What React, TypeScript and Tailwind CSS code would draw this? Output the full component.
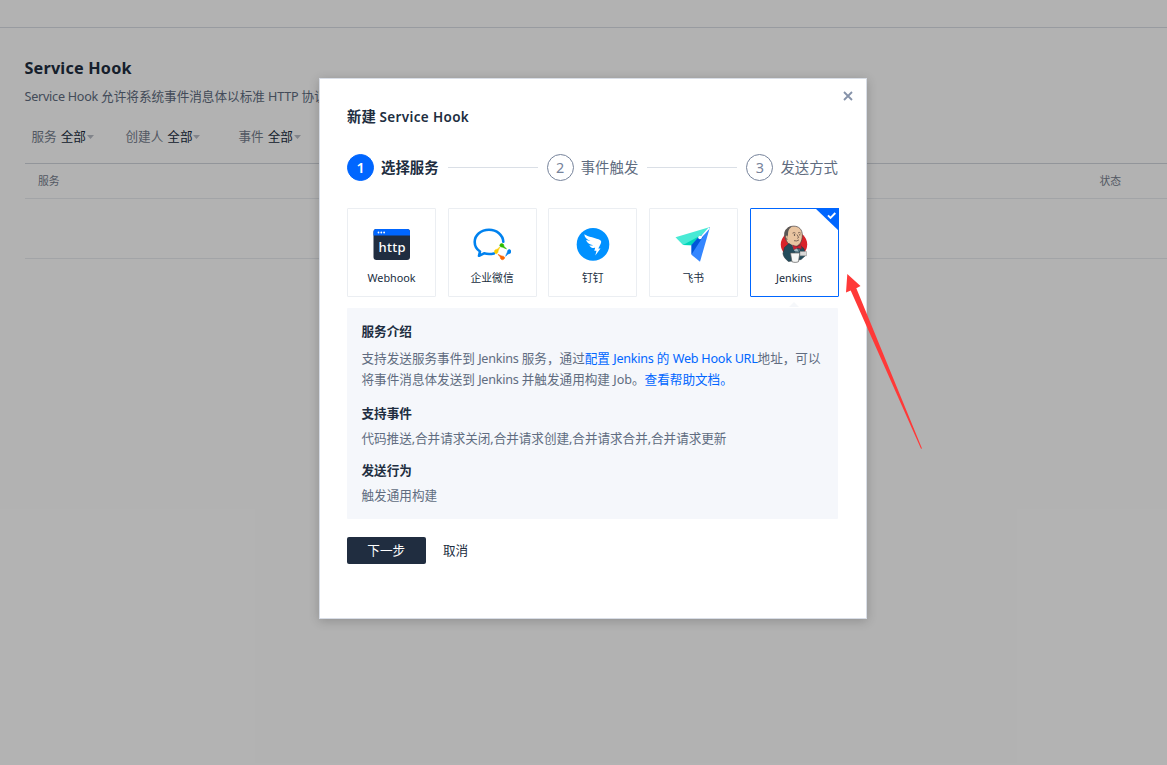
import type { ReactNode } from "react";

function Latin({ children }: { children: ReactNode }) {
  return <span className="tracking-[-0.25px]">{children}</span>;
}

function Caret() {
  return (
    <svg className="ml-px h-[4px] w-[7px]" viewBox="0 0 7 4">
      <path d="M0 0h7L3.5 4z" fill="#b9bdc6" />
    </svg>
  );
}

function Filter({ label, className }: { label: string; className: string }) {
  return (
    <div className={`flex items-center whitespace-nowrap ${className}`}>
      <span className="pt-px text-[#76808e]">{label}</span>
      <span className="ml-[4px] text-[#202d40]">全部</span>
      <Caret />
    </div>
  );
}

function WebhookIcon() {
  return (
    <svg className="h-[36px] w-[38px]" viewBox="0 0 38 36">
      <rect x=".5" y="3" width="36.500" height="31" rx="3" fill="#202d40" />
      <path d="M.5 9.500V6a3 3 0 0 1 3-3H34a3 3 0 0 1 3 3v3.500z" fill="#0066ff" />
      <g fill="#fff">
        <circle cx="5.500" cy="6.500" r=".9" />
        <circle cx="8.300" cy="6.500" r=".9" />
        <circle cx="11.100" cy="6.500" r=".9" />
      </g>
      <text x="19" y="26" fill="#fff" fontSize="13" fontWeight="500" textAnchor="middle" textLength="27" fontFamily="Noto Sans, sans-serif">http</text>
    </svg>
  );
}

function WecomIcon() {
  return (
    <svg className="h-[36px] w-[38px]" viewBox="0 0 38 36">
      <path d="M30.300 15.800C30 8.800 23.700 3.800 16 3.800 8 3.800 1.700 9 1.700 16c0 4 2 7.300 5.300 9.500L6 29.800l5-2.500c3.200.9 6.700.9 10 .1" fill="none" stroke="#0082ef" strokeWidth="2.600" strokeLinejoin="round" strokeLinecap="round" />
      <path d="M27 18.500c1-1.600 3.800-1 3.800 1 0 1.500 1.700 2.400 2.700 3.300-2.300-.5-3.300-1.700-5-1.800-1.300-.1-2.200-1.300-1.500-2.500z" fill="#2dbc00" stroke="#2dbc00" strokeWidth=".6" />
      <path d="M37.200 23.800c1.600 1.100 1 3.900-1.200 3.900-1.300 0-2.300 1.700-3.300 2.600.5-2.200 1.600-3.300 1.800-4.900.1-1.400 1.500-2.300 2.700-1.600z" fill="#0082ef" stroke="#0082ef" strokeWidth=".6" />
      <path d="M31.400 32.600c-1.200 1.900-3.900 1.200-4-.9 0-1.400-1.600-2.300-2.500-3.300 2.200.6 3.200 1.600 4.900 1.800 1.400.1 2.300 1.300 1.600 2.400z" fill="#fb6500" stroke="#fb6500" strokeWidth=".6" />
      <path d="M22.500 27.400c-1.800-1.100-1.200-3.900 1-4 1.500 0 2.300-1.700 3.300-2.600-.5 2.200-1.600 3.300-1.800 4.900-.1 1.400-1.300 2.400-2.500 1.700z" fill="#fbcd00" stroke="#fbcd00" strokeWidth=".6" />
    </svg>
  );
}

function DingIcon() {
  return (
    <svg className="h-[36px] w-[38px]" viewBox="0 0 38 36">
      <circle cx="19" cy="18.400" r="16.300" fill="#0091ff" />
      <path d="M10.300 8.300c3 2.400 12.500 3.900 15.700 5.800 1.300.8 1.400 1.800.9 3.100-.6 1.700-1.900 4-2.700 5.300h2.300l-5.200 6.900 1.200-4.600h-2.200l.9-3c-2.500.5-4.500-.3-6-2.400 1.600.3 2.800.2 3.900-.1-3.500-.6-6-2.300-7.100-5.200 1.500.5 3 .7 4.500.7-3.700-1.300-6-3.300-6.200-6.500z" fill="#fff" />
    </svg>
  );
}

function FeishuIcon() {
  return (
    <svg className="h-[36px] w-[38px]" viewBox="0 0 38 36">
      <path d="M1.500 11.200 36 1 17.500 19.200 9 19z" fill="#49ead5" />
      <path d="m9 19 16.500-9L17.800 19.200z" fill="#00d6b9" />
      <path d="M36 1 26 35.700l-8.500-7V19z" fill="#3486ff" />
      <path d="M31 7.500 17.500 28.500V19l7-8z" fill="#0057d9" />
      <path d="M35.200 2 26.500 11.800" stroke="#fff" strokeWidth="1.500" />
      <circle cx="26" cy="11.500" r="1.800" fill="#fff" />
    </svg>
  );
}

function JenkinsIcon() {
  return (
    <svg className="h-[38px] w-[28px]" viewBox="0 0 28 38">
      <ellipse cx="14" cy="19.500" rx="13.200" ry="13" fill="#d8232a" />
      <path d="M5 10C4 5 8 1.500 13 1.200c6-.4 9.500 3.500 9.300 9.300-.1 5.500-2.200 9.700-6 10.700C11 22.400 7 18 6 14.500z" fill="#e9c5a1" stroke="#4b4140" strokeWidth=".7" />
      <path d="M5.500 14.500C3.500 11 4 5.500 7.500 3.200c1.600-1.300 3.200-1.600 4.700-1.600C8.600 3.500 8 6.500 8 10.500l-1 4z" fill="#5a5755" />
      <path d="M7.500 10.500c-2-.8-2.700 2.500.3 4" fill="#e9c5a1" stroke="#755d50" strokeWidth=".6" />
      <path d="M12.500 8.200q1.700-1.200 3 0M18 8q1.500-1.200 2.700.2M17 9.500l1.700 3-1.500.8M14 15.700q3 .9 5-.8" fill="none" stroke="#665146" strokeWidth=".8" />
      <circle cx="14.500" cy="10" r=".7" fill="#302b2b" />
      <circle cx="19.800" cy="9.800" r=".6" fill="#302b2b" />
      <path d="M4.500 22.500 9 18.500l6.500 4 4.500-2.300 4 3.500 1.500 6.800-4.500 4-12.500 2c-3-2.200-5.200-5-5.500-8z" fill="#234b5b" stroke="#25343c" strokeWidth=".6" />
      <path d="m12 19.500 4.500 3 2 4-4-.5z" fill="#b9cbd3" />
      <path d="m12.500 20 4.500 1.800 4-2.300.5 4.500-3.800-1-4 1.700z" fill="#cf2030" stroke="#752c36" strokeWidth=".5" />
      <path d="M15 25h5M15 27h4" stroke="#7f9caa" strokeWidth=".8" />
      <path d="M10.500 28h9.300l-1.300 8.700c-2 .9-4.600.9-6.600 0z" fill="#f5f6f5" stroke="#59595a" strokeWidth=".7" />
      <path d="M20 26.500h6.500v4.300H20z" fill="#dad9d8" stroke="#888" strokeWidth=".5" />
    </svg>
  );
}

function Card({ label, children, active = false }: { label: string; children: ReactNode; active?: boolean }) {
  return (
    <div className={`relative flex h-[89px] w-[89px] flex-col items-center rounded-[1px] border ${active ? "border-[#0066ff]" : "border-[#ebeef2]"}`}>
      <div className="mt-[16px] flex h-[38px] items-center">{children}</div>
      <span className="mt-[6px] whitespace-nowrap text-[10.8px] leading-[18px] text-[#202d40]">{label}</span>
      {active && (
        <svg className="absolute -right-px -top-px h-[23px] w-[24px]" viewBox="0 0 24 23">
          <path d="M0 0h24v23z" fill="#0066ff" />
          <path d="m13 7.300 2.500 2.500 4.800-4.800" fill="none" stroke="#fff" strokeWidth="1.900" />
        </svg>
      )}
    </div>
  );
}

function Step({ n, label, active = false }: { n: number; label: string; active?: boolean }) {
  return (
    <div className="flex items-center whitespace-nowrap text-[14.4px]">
      <span className={`flex h-[27px] w-[27px] items-center justify-center rounded-full border pt-px leading-none ${active ? "border-[#0066ff] bg-[#0066ff] font-semibold text-white" : "border-[#76839b] text-[#76839b]"}`}>{n}</span>
      <span className={`ml-[7px] pt-px leading-[20px] ${active ? "font-bold text-[#202d40]" : "text-[#606c80]"}`}>{label}</span>
    </div>
  );
}

export default function App() {
  return (
    <div className="relative h-[765px] w-full overflow-hidden bg-white font-['Noto_Sans','Noto_Sans_CJK_SC',sans-serif] text-[12.6px] text-[#202d40]">
      <header className="h-[28px] border-b border-[#dadfe6]" />
      <main className="pl-[24.5px]">
        <h1 className="pt-[28px] text-[16.2px] font-bold leading-[24px] tracking-[0.2px]">Service Hook</h1>
        <p className="mt-[7px] whitespace-nowrap leading-[20px] text-[#606c80]">
          <Latin>Service Hook </Latin>允许将系统事件消息体以标准 <Latin>HTTP</Latin> 协议推送到第三方服务
        </p>
        <div className="mt-[20px] flex h-[20px] pl-[7px]">
          <Filter label="服务" className="w-[94px]" />
          <Filter label="创建人" className="w-[113px]" />
          <Filter label="事件" className="w-[94px]" />
        </div>
        <div className="mt-[16px] flex h-[36px] items-center justify-between border-b border-t border-b-[#e8ebf0] border-t-[#d2d6dd] pl-[13.5px] pr-[46px] text-[10.8px] text-[#76808e]">
          <span>服务</span>
          <span>状态</span>
        </div>
        <div className="h-[60px] border-b border-[#e8ebf0]" />
      </main>

      <div className="absolute inset-0 flex items-start bg-black/30 pl-[319px] pt-[78px]">
        <section className="relative h-[541px] w-[547.5px] border border-[#d8dde6] bg-white px-[27px] shadow-[0_2px_10px_rgba(0,0,0,0.2)]">
          <svg className="absolute right-[12.5px] top-[12px] h-[10px] w-[10px]" viewBox="0 0 10 10">
            <path d="m1 1 8 8m0-8L1 9" stroke="#8592a9" strokeWidth="1.800" />
          </svg>
          <h2 className="pt-[28px] text-[14.4px] font-bold leading-[20px]">
            新建 <span className="text-[13.5px] font-semibold tracking-[0.35px]">Service Hook</span>
          </h2>
          <div className="mt-[27px] flex h-[27px] w-[491px] items-center justify-between">
            <Step n={1} label="选择服务" active />
            <span className="h-px w-[90px] bg-[#dadfe6]" />
            <Step n={2} label="事件触发" />
            <span className="h-px w-[90px] bg-[#dadfe6]" />
            <Step n={3} label="发送方式" />
          </div>
          <div className="mt-[27px] flex w-[491.5px] justify-between">
            <Card label="Webhook"><WebhookIcon /></Card>
            <Card label="企业微信"><WecomIcon /></Card>
            <Card label="钉钉"><DingIcon /></Card>
            <Card label="飞书"><FeishuIcon /></Card>
            <Card label="Jenkins" active><JenkinsIcon /></Card>
          </div>
          <div className="flex h-[11px] w-[491px] items-end justify-end pr-[39px]">
            <svg className="mb-[1px] h-[5px] w-[10px]" viewBox="0 0 10 5"><path d="m5 0 5 5H0z" fill="#f5f7fa" /></svg>
          </div>
          <div className="h-[211px] w-[491px] rounded-[1px] bg-[#f5f7fb] px-[14.500px] pt-[13.5px] text-[#606c80]">
            <h3 className="font-bold leading-[20px] text-[#202d40]">服务介绍</h3>
            <p className="mt-[6.5px] whitespace-nowrap leading-[21px]">
              支持发送服务事件到 <Latin>Jenkins</Latin> 服务，通过<a className="text-[#0066ff]">配置 <Latin>Jenkins</Latin> 的 <Latin>Web Hook URL</Latin></a>地址，可以
              <br />
              将事件消息体发送到 <Latin>Jenkins</Latin> 并触发通用构建 Job。<a className="text-[#0066ff]">查看帮助文档。</a>
            </p>
            <h3 className="mt-[14px] font-bold leading-[20px] text-[#202d40]">支持事件</h3>
            <p className="mt-[5px] whitespace-nowrap leading-[20px] tracking-[-0.04px]">代码推送,合并请求关闭,合并请求创建,合并请求合并,合并请求更新</p>
            <h3 className="mt-[12px] font-bold leading-[20px] text-[#202d40]">发送行为</h3>
            <p className="mt-[5px] leading-[20px]">触发通用构建</p>
          </div>
          <div className="mt-[18px] flex items-center">
            <button className="h-[27px] w-[78.5px] rounded-[2px] bg-[#202d40] pt-[2px] text-white">下一步</button>
            <button className="ml-[17.5px] pt-[2px]">取消</button>
          </div>
        </section>
      </div>

      <svg className="absolute left-[840px] top-[270px] h-[185px] w-[90px]" viewBox="840 270 90 185">
        <path d="m847.300 274 13.200 12-4.200 2.200L922 448.500l-1 .3L850.700 290.500l-4.700 2z" fill="#ff3938" />
      </svg>
    </div>
  );
}
